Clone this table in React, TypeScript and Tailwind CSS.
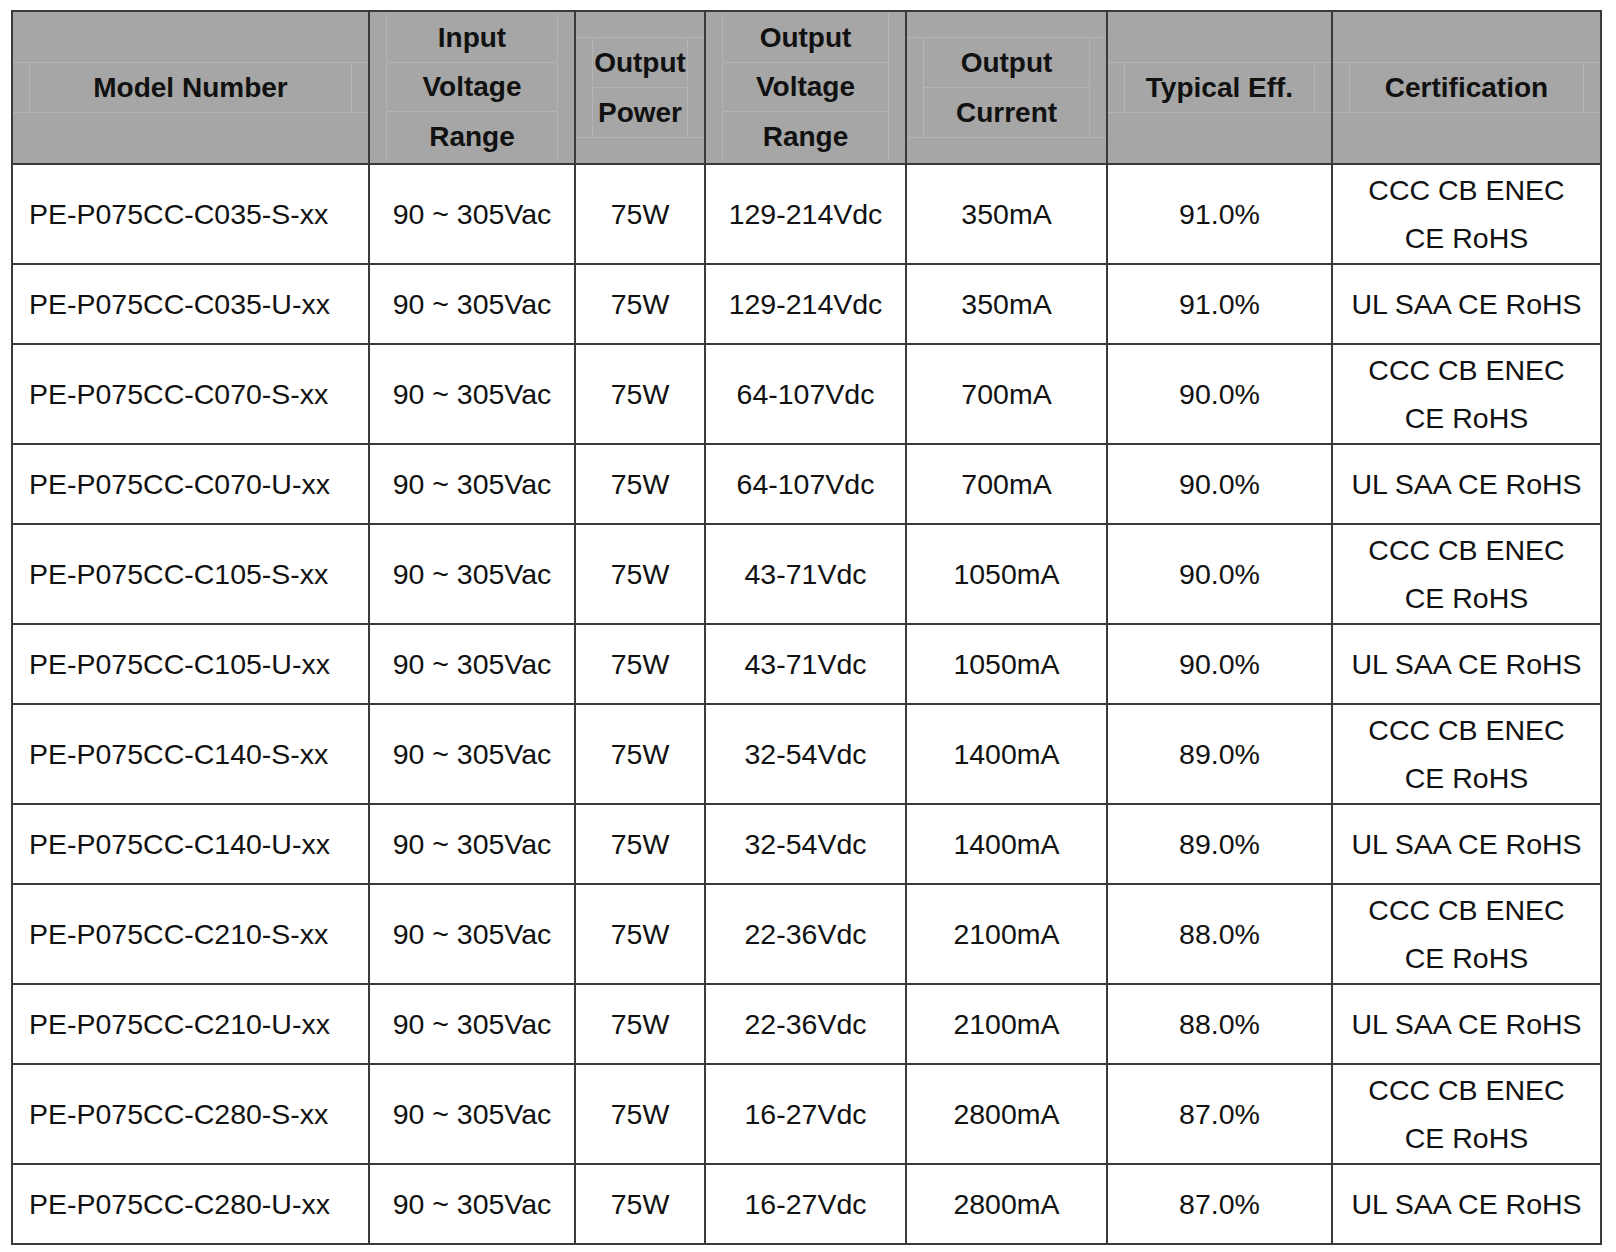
const specs = [
  { code: "C035", volt: "129-214Vdc", current: "350mA", eff: "91.0%" },
  { code: "C070", volt: "64-107Vdc", current: "700mA", eff: "90.0%" },
  { code: "C105", volt: "43-71Vdc", current: "1050mA", eff: "90.0%" },
  { code: "C140", volt: "32-54Vdc", current: "1400mA", eff: "89.0%" },
  { code: "C210", volt: "22-36Vdc", current: "2100mA", eff: "88.0%" },
  { code: "C280", volt: "16-27Vdc", current: "2800mA", eff: "87.0%" },
];

const rows = specs.flatMap((s) => [
  { ...s, model: `PE-P075CC-${s.code}-S-xx`, cert: ["CCC CB ENEC", "CE RoHS"] },
  { ...s, model: `PE-P075CC-${s.code}-U-xx`, cert: ["UL SAA CE RoHS"] },
]);

// faint inner grid lines left over in the header cells
function OneLine({ text }: { text: string }) {
  return (
    <div className="border-y border-[#b4b4b4]">
      <div className="mx-[16px] flex h-[49px] items-center justify-center border-x border-[#b4b4b4]">
        {text}
      </div>
    </div>
  );
}

function TwoLine({ lines }: { lines: [string, string] }) {
  return (
    <div className="border-y border-[#b4b4b4]">
      <div className="mx-[16px] border-x border-[#b4b4b4]">
        <div className="flex h-[50px] items-center justify-center border-b border-[#b4b4b4]">
          {lines[0]}
        </div>
        <div className="flex h-[49px] items-center justify-center">{lines[1]}</div>
      </div>
    </div>
  );
}

function ThreeLine({ lines }: { lines: [string, string, string] }) {
  return (
    <div className="mx-[16px] border-x border-[#b4b4b4]">
      <div className="flex h-[50px] items-center justify-center border-b border-[#b4b4b4]">
        {lines[0]}
      </div>
      <div className="flex h-[49px] items-center justify-center border-b border-[#b4b4b4]">
        {lines[1]}
      </div>
      <div className="flex h-[50px] items-center justify-center">{lines[2]}</div>
    </div>
  );
}

const th = "h-[153px] border-2 border-[#3a3a3a] bg-[#a6a6a6] p-0 align-middle text-[28px] font-bold";
const td = "border-2 border-[#3a3a3a] p-0 text-center align-middle";

export default function App() {
  return (
    <div className="min-h-screen bg-white pl-[11px] pt-[10px] font-['Liberation_Sans',Arial,Helvetica,sans-serif] text-[28.5px] leading-[48px] text-[#111]">
      <table className="w-[1591px] table-fixed border-collapse">
        <colgroup>
          <col className="w-[357px]" />
          <col className="w-[206px]" />
          <col className="w-[130px]" />
          <col className="w-[201px]" />
          <col className="w-[201px]" />
          <col className="w-[225px]" />
          <col className="w-[269px]" />
        </colgroup>
        <thead>
          <tr>
            <th className={th}>
              <OneLine text="Model Number" />
            </th>
            <th className={th}>
              <ThreeLine lines={["Input", "Voltage", "Range"]} />
            </th>
            <th className={th}>
              <TwoLine lines={["Output", "Power"]} />
            </th>
            <th className={th}>
              <ThreeLine lines={["Output", "Voltage", "Range"]} />
            </th>
            <th className={th}>
              <TwoLine lines={["Output", "Current"]} />
            </th>
            <th className={th}>
              <OneLine text="Typical Eff." />
            </th>
            <th className={th}>
              <OneLine text="Certification" />
            </th>
          </tr>
        </thead>
        <tbody>
          {rows.map((r) => (
            <tr key={r.model} className={r.cert.length > 1 ? "h-[100px]" : "h-[80px]"}>
              <td className={`${td} pl-[16px] text-left`}>{r.model}</td>
              <td className={td}>90 ~ 305Vac</td>
              <td className={td}>75W</td>
              <td className={td}>{r.volt}</td>
              <td className={td}>{r.current}</td>
              <td className={td}>{r.eff}</td>
              <td className={td}>
                {r.cert.map((c) => (
                  <div key={c}>{c}</div>
                ))}
              </td>
            </tr>
          ))}
        </tbody>
      </table>
    </div>
  );
}
